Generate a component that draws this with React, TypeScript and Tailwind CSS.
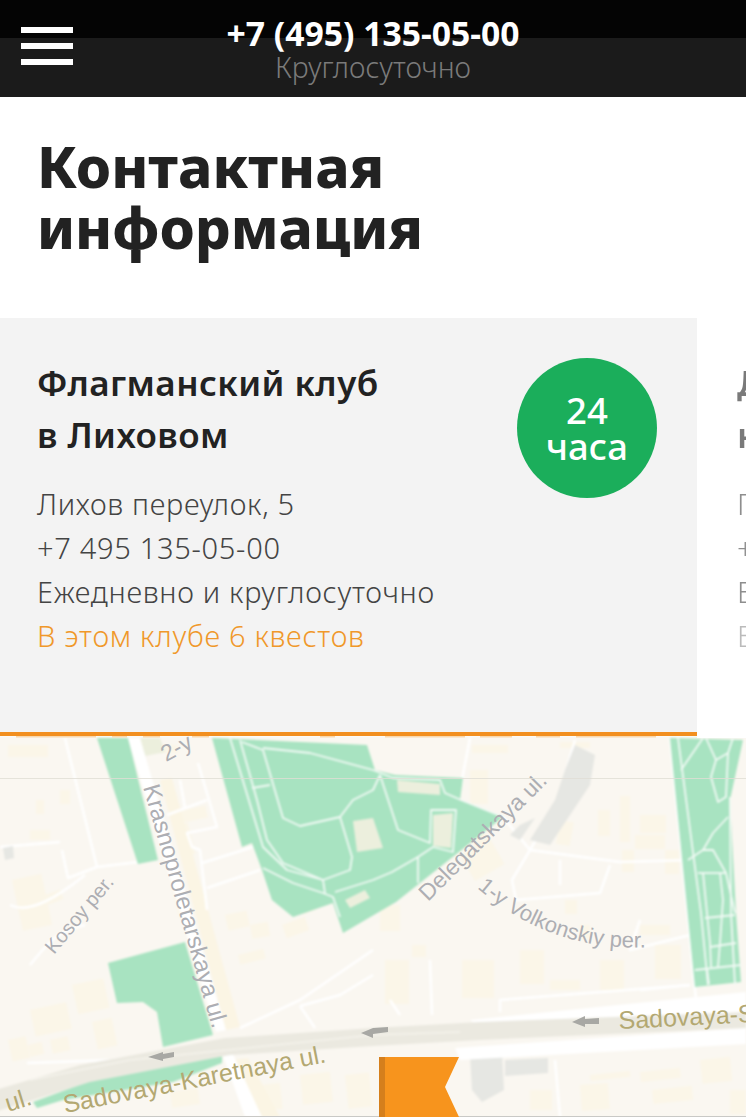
const bodyFont = "font-['Noto_Sans','Open_Sans',sans-serif]";

// x, y, w, h, tilt in degrees: pale house footprints on the map
const blocks: number[][] = [
  [12, 880, 30, 52, -12], [30, 1010, 37, 27, -12], [72, 985, 32, 30, -12], [92, 1022, 20, 28, -12],
  [8, 1040, 18, 22, -12], [28, 1045, 14, 12, -12], [50, 1040, 18, 14, -12], [8, 745, 40, 12, 0],
  [30, 830, 20, 10, 0], [36, 800, 8, 14, 0], [60, 790, 10, 14, 0], [45, 895, 16, 10, -20],
  [20, 900, 8, 20, -10], [170, 813, 36, 12, -12], [178, 825, 10, 32, -14], [160, 745, 18, 8, 0],
  [170, 880, 10, 40, -14], [225, 915, 22, 16, -12], [250, 925, 18, 14, -10], [238, 955, 26, 10, -14],
  [282, 925, 24, 14, -20], [300, 905, 14, 10, -20], [380, 905, 20, 26, 0], [385, 960, 24, 44, 0],
  [412, 945, 14, 12, 0], [460, 855, 34, 30, -30], [470, 770, 18, 34, 0], [475, 832, 12, 28, 8],
  [560, 820, 14, 24, 10], [598, 810, 12, 26, 0], [620, 796, 10, 46, 0], [640, 815, 26, 18, 0],
  [635, 835, 30, 14, 0], [622, 850, 12, 22, 0], [665, 850, 14, 24, 0], [565, 900, 12, 14, 0],
  [462, 960, 32, 38, 0], [520, 950, 24, 34, 0], [550, 980, 30, 10, 0], [600, 960, 24, 30, 0],
  [640, 925, 30, 10, 0], [655, 945, 26, 34, 0], [580, 925, 10, 14, 0], [590, 1075, 40, 6, -6],
  [580, 1085, 28, 26, -4], [640, 1072, 40, 10, -6], [652, 1090, 40, 14, -6], [700, 1060, 30, 24, -6],
  [530, 1090, 22, 20, 0], [730, 1090, 16, 24, 0], [260, 1085, 20, 26, -6], [300, 1075, 30, 30, -6],
  [170, 1092, 28, 16, -8], [345, 1075, 24, 34, -6], [472, 745, 36, 8, 0], [560, 742, 30, 6, 0],
];

const parkPaths = [
  "M230 738 L263 847 L287 870 L323 880 L350 870 L352 857 L340 817 L300 826 L283 818 L263 750 L242 742",
  "M240 740 L257 800 L267 840 L283 863 L323 880",
  "M252 788 L270 785",
  "M263 868 L293 883 L323 893 L333 897 L340 917",
  "M323 880 L325 893",
  "M335 892 L373 880 L392 872 L418 857",
  "M340 817 L353 800 L373 790 L380 775",
  "M263 748 L310 753 L373 770 L393 778 L440 780 L445 793 L461 800 L503 817",
  "M380 775 L398 830 L430 843 L431 810 L456 810 L453 852 L433 847 L418 857 L418 883",
  // right park
  "M678 738 L701 913 L708 985",
  "M681 770 L703 738",
  "M706 738 L716 760 L711 777 L718 802 L726 797 L728 753 L716 760",
  "M733 738 L728 753",
  "M730 797 L731 913 L735 985",
  "M728 817 L713 833 L703 850 L688 860",
  "M703 850 L713 850 L726 873 L735 913",
  "M698 873 L726 873",
  "M703 873 L710 943 L711 967",
  "M720 873 L723 900 L720 943 L718 967",
  "M705 918 L735 915",
  "M710 947 L736 943",
  "M695 970 L741 965",
  "M707 968 L709 984",
];

const streets = [
  "M65 738 L97 867 L68 878 L62 850",
  "M0 847 L60 842",
  "M97 867 L138 862",
  "M167 815 L207 800",
  "M198 763 L217 827 L187 833 L192 847 L200 850 L207 910",
  "M180 780 L185 808",
  "M202 863 L253 847",
  "M207 888 L260 870",
  "M10 905 C 30 915 60 895 85 875",
  "M30 965 C 50 940 60 930 85 925",
  "M27 1063 L113 1060 L147 1055",
  "M240 1028 L300 1000 L373 950",
  "M300 1006 L340 995 L373 975",
  "M300 1006 L315 1028",
  "M460 790 L470 738",
  "M503 817 L530 850 L620 862 L690 860",
  "M530 850 L556 805 L575 740",
  "M530 850 L512 880 L516 900 L600 893 L610 865",
  "M560 860 L560 885",
  "M640 920 L630 950 L690 935",
  "M640 990 L690 985",
  "M500 1012 L500 1000 L690 985",
  "M670 738 L696 1000",
  "M430 960 L432 1015",
  "M390 1000 L400 1015",
  "M555 1060 L560 1117",
];

const CityMap = () => {
  return (
    <svg viewBox="0 736 746 381" className="block w-full h-[381px]">
      <g className="blur-[1px]">
        <rect x="-5" y="736" width="756" height="386" fill="#faf7f1" />
        {blocks.map(([x, y, w, h, tilt]) => (
          <rect
            key={`${x}-${y}`}
            x={x}
            y={y}
            width={w}
            height={h}
            fill="#fbf6e8"
            transform={`rotate(${tilt} ${x} ${y})`}
          />
        ))}

        {/* yellow side road along Krasnoproletarskaya */}
        <path d="M160 780 L172 778 L240 1027 L226 1030 Z" fill="#fbf5e4" />
        <path d="M232 1060 L248 1058 L280 1117 L262 1117 Z" fill="#fbf5e4" />

        <g fill="none" stroke="#ffffff" strokeWidth="2.5" strokeLinejoin="round">
          {streets.map((d) => (
            <path key={d} d={d} />
          ))}
        </g>

        {/* parks */}
        <g fill="#a8e3c1">
          <path d="M97 738 L128 738 L158 860 L138 864 Z" />
          <path d="M212 738 L367 745 L375 770 L395 775 L463 778 L460 800 L503 817 L396 902 L343 933 L333 903 L293 917 L272 900 L262 870 L252 843 L242 847 Z" />
          <path d="M108 963 L185 942 L213 1035 L163 1047 L157 1012 L143 1002 L117 1003 Z" />
          <path d="M33 1102 L93 1080 L222 1053 L222 1063 L173 1082 L63 1100 L37 1108 Z" />
          <path d="M670 738 L743 740 L730 800 L736 913 L741 982 L695 987 Z" />
        </g>
        <g fill="none" stroke="#f2faf5" strokeWidth="1.8" strokeLinejoin="round">
          {parkPaths.map((d) => (
            <path key={d} d={d} />
          ))}
        </g>

        {/* buildings inside the park */}
        <g fill="#ecefdd">
          <path d="M353 821 L373 818 L383 848 L357 852 Z" />
          <path d="M433 815 L453 813 L451 848 L433 846 Z" />
          <path d="M397 780 L440 784 L440 795 L398 792 Z" />
          <path d="M345 900 L365 890 L370 898 L350 908 Z" />
          <path d="M140 738 L160 738 L165 752 L145 756 Z" />
        </g>

        {/* grey blocks */}
        <g fill="#e6e7e3">
          <path d="M575 745 L595 755 L590 785 L550 845 L530 840 L555 800 L565 770 Z" />
          <path d="M520 825 L535 818 L520 840 L510 835 Z" />
          <path d="M470 1055 L502 1052 L504 1090 L482 1102 L472 1090 Z" />
          <path d="M505 1060 L548 1058 L548 1073 L505 1076 Z" />
          <path d="M3 848 L13 846 L14 858 L5 860 Z" />
        </g>

        {/* Krasnoproletarskaya and the Sadovaya ring */}
        <path d="M128 738 L140 738 L226 1030 L216 1032 Z" fill="#ffffff" />
        <path d="M222 1053 L232 1052 L262 1117 L245 1117 Z" fill="#ffffff" />
        <path d="M470 1020 L746 992 L746 1012 L480 1028 Z" fill="#ffffff" />
        <path d="M455 1048 L746 1028 L746 1044 L460 1060 Z" fill="#ffffff" />
        <path d="M-5 1090 L80 1065 L225 1038 L373 1028 L480 1022 L746 1012 L746 1028 L480 1040 L373 1046 L230 1055 L90 1082 L-5 1112 Z" fill="#ebe9e0" />
        <path d="M30 1080 L130 1060 L373 1035 L460 1032" fill="none" stroke="#f5f3ec" strokeWidth="1.5" />
      </g>

      {/* road arrows */}
      <g fill="#a8a8a4">
        <path d="M148 1057 L163 1052 L163 1054 L174 1052 L174 1057 L163 1059 L163 1061 Z" />
        <path d="M361 1033 L373 1028 L388 1027 L388 1032 L373 1034 L373 1038 Z" />
        <path d="M572 1022 L585 1016 L585 1019 L599 1018 L599 1024 L585 1024 L585 1027 Z" />
      </g>

      {/* street names */}
      <path id="volkonskiy" d="M477 888 C 520 925, 580 955, 668 946" fill="none" />
      <g fontFamily="'Liberation Sans', sans-serif" fill="#adaeb3">
        <text transform="translate(166 762) rotate(-28)" fontSize="23">2-y</text>
        <text transform="translate(143 787) rotate(74)" fontSize="24">Krasnoproletarskaya ul.</text>
        <text transform="translate(54 955) rotate(-50)" fontSize="20">Kosoy per.</text>
        <text transform="translate(428 902) rotate(-45)" fontSize="23">Delegatskaya ul.</text>
        <text fontSize="22">
          <textPath href="#volkonskiy">1-y Volkonskiy per.</textPath>
        </text>
      </g>
      <g fontFamily="'Liberation Sans', sans-serif" fill="#b3a872" fontSize="25">
        <text transform="translate(8 1112) rotate(-17)">ul.</text>
        <text transform="translate(65 1113) rotate(-11)">Sadovaya-Karetnaya ul.</text>
        <text transform="translate(619 1029) rotate(-3)">Sadovaya-Sukharevskaya</text>
      </g>

      {/* scan line, top edge smear and bottom rule */}
      <rect x="0" y="778" width="746" height="1" fill="#e0ddd4" opacity="0.8" />
      <g fill="#f8d8ae">
        <rect x="16" y="736" width="80" height="1.5" />
        <rect x="112" y="736" width="15" height="1.5" />
        <rect x="143" y="736" width="17" height="1.5" />
        <rect x="192" y="736" width="17" height="1.5" />
        <rect x="320" y="736" width="15" height="1.5" />
        <rect x="385" y="736" width="80" height="1.5" />
        <rect x="480" y="736" width="32" height="1.5" />
        <rect x="536" y="736" width="24" height="1.5" />
        <rect x="576" y="736" width="80" height="1.5" />
      </g>
      <rect x="697" y="736" width="49" height="2" fill="#ffffff" />
      <rect x="0" y="1116" width="746" height="1" fill="#c9c9c6" />
    </svg>
  );
};

const MapFlag = () => {
  return (
    <svg viewBox="0 0 80 60" className="absolute left-[379px] bottom-0 w-20 h-[60px]">
      <path d="M0 0 H80 L66 30 L80 60 H0 Z" fill="#f7941d" />
      <rect x="0" y="0" width="6" height="60" fill="#d57f1c" />
    </svg>
  );
};

export default function App() {
  return (
    <div className={`w-[746px] h-[1117px] overflow-hidden bg-white text-[#222] ${bodyFont}`}>
      {/* Header */}
      <header className="relative h-[97px] bg-[#1b1b1b]">
        <div className="absolute inset-x-0 top-0 h-[38px] bg-[#040404]"></div>
        <div className="relative grid grid-cols-[1fr_auto_1fr] items-start pl-[21px]">
          <div className="flex flex-col gap-2.5 w-[52px] pt-[27px]">
            <span className="h-1.5 bg-white"></span>
            <span className="h-1.5 bg-white"></span>
            <span className="h-1.5 bg-white"></span>
          </div>
          <div className="text-center pt-[14px] pr-[21px]">
            <div className="text-[33.7px] leading-[38px] font-bold text-white">+7 (495) 135-05-00</div>
            <div className="text-[28.5px] leading-[30px] font-light text-[#7a7a7a]">Круглосуточно</div>
          </div>
        </div>
      </header>

      {/* Heading */}
      <h1 className="pl-[37px] pt-[39px] h-[221px] text-[56.5px] leading-[61px] font-extrabold text-[#222]">
        Контактная
        <br />
        информация
      </h1>

      {/* Clubs */}
      <div className="flex overflow-hidden h-[418px]">
        <section className="relative w-[697px] shrink-0 h-[418px] bg-[#f3f3f3] border-b-4 border-[#f28f1f] pl-[37px] pt-[39px]">
          <h2 className="text-[35px] leading-[52px] font-semibold tracking-[0.45px] text-[#222]">
            Флагманский клуб
            <br />в Лиховом
          </h2>
          <div className="mt-[21px] text-[29px] leading-[44px] font-light tracking-[0.7px] text-[#444]">
            <p>Лихов переулок, 5</p>
            <p>+7 495 135-05-00</p>
            <p>Ежедневно и круглосуточно</p>
            <p className="text-[#f0982a]">В этом клубе 6 квестов</p>
          </div>
          <div className="absolute left-[517px] top-10 w-[140px] h-[140px] rounded-full bg-[#1bae5b] flex flex-col items-center justify-center text-white font-medium text-[36.5px] leading-[36px]">
            <span>24</span>
            <span>часа</span>
          </div>
        </section>
        <section className="w-[697px] shrink-0 pl-10 pt-[39px] opacity-60">
          <h2 className="text-[35px] leading-[52px] font-semibold text-[#222]">
            Д
            <br />к
          </h2>
          <div className="mt-[21px] text-[29px] leading-[44px] font-light text-[#444]">
            <p>П</p>
            <p>+7</p>
            <p>Е</p>
            <p className="opacity-60">В</p>
          </div>
        </section>
      </div>

      {/* Map */}
      <div className="relative h-[381px] overflow-hidden">
        <CityMap />
        <MapFlag />
      </div>
    </div>
  );
}
